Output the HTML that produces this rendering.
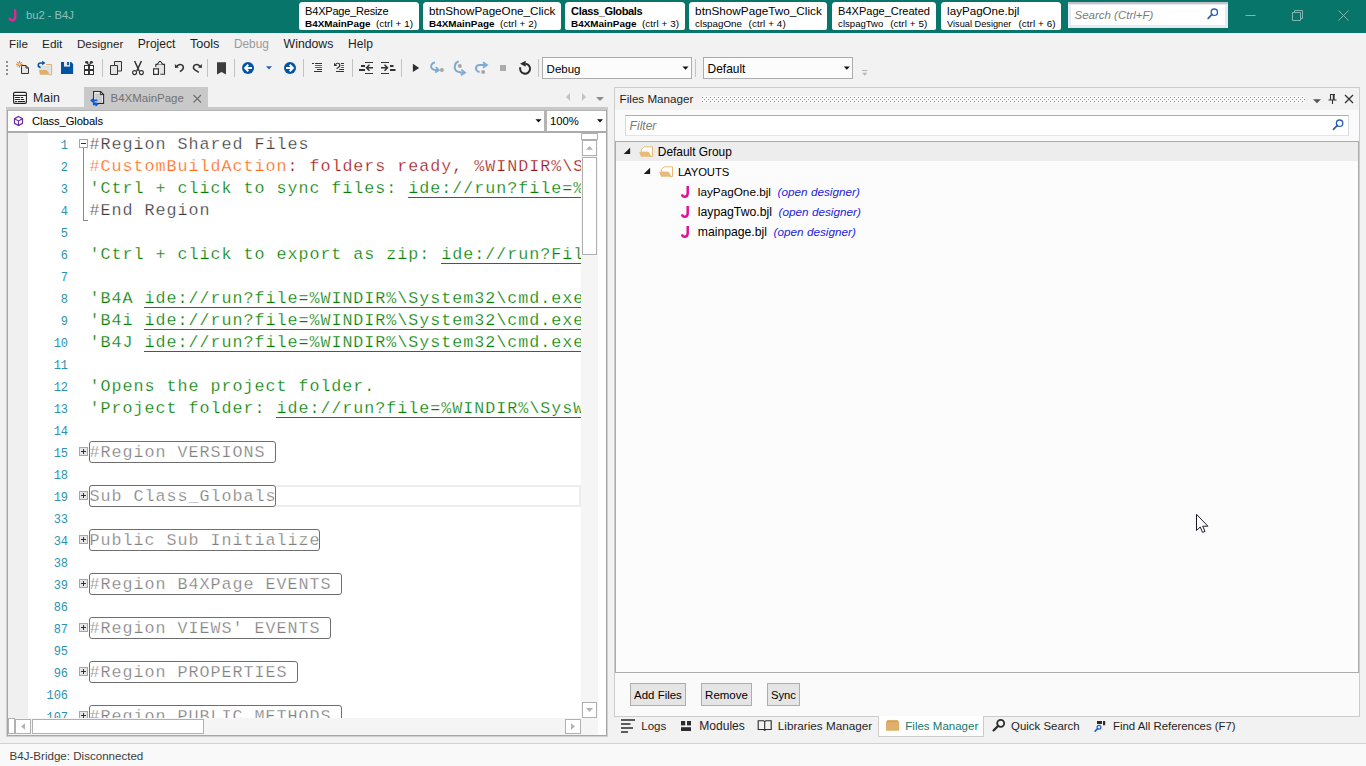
<!DOCTYPE html>
<html lang="en"><head><meta charset="utf-8"><title>bu2 - B4J</title>
<style>
*{box-sizing:border-box;margin:0;padding:0}
html,body{width:1366px;height:766px;overflow:hidden}
body{position:relative;background:#f2f2f2;font-family:"Liberation Sans",sans-serif;font-size:12px;color:#1e1e1e}
.a{position:absolute}
.t{position:absolute;white-space:pre;display:block;font-family:"Liberation Sans",sans-serif;line-height:16px}
svg{position:absolute;overflow:visible}
.titlebar{left:0;top:0;width:1366px;height:33px;background:#07756a}
.ttab{top:2px;height:28px;background:#fff;border-radius:3.5px 3.5px 2px 2px}
.sep{width:1px;background:#c3c3c3;top:59px;height:18px}
.combo{background:#fff;border:1px solid #acacac}
.btn{background:#e5e5e5;border:1px solid #adadad;top:683px;height:23px}
.code{position:absolute;white-space:pre;font-family:"Liberation Mono",monospace;font-size:16.7px;letter-spacing:.98px;line-height:22px;height:22px;left:90px;padding-top:1px;-webkit-text-stroke:.25px #fff}
.ln{position:absolute;white-space:pre;font-family:"Liberation Mono",monospace;font-size:12px;letter-spacing:-.05px;line-height:22px;height:22px;left:28px;width:40px;text-align:right;color:#2b91af;padding-top:2.2px}
.g{color:#008000}.lk{color:#008000;background:linear-gradient(#0a860a,#0a860a) 0 17.6px/100% 1.5px no-repeat}
.o{color:#ff6a13}.r{color:#a31515}.k{color:#3c3c3c}
.fold{position:absolute;left:79px;width:9px;height:9px;border:1px solid #a5a5a5;background:#fff}
.fold i{position:absolute;left:1px;top:3px;width:5px;height:1px;background:#333}
.fold b{position:absolute;left:3px;top:1px;width:1px;height:5px;background:#333}
.fold.p{background:#e6e6e6}
.cbox{position:absolute;left:89px;height:22px;border:1px solid #6e6e6e;border-radius:3px;background:#fff}
.cbox span{position:absolute;left:-.5px;top:0px;white-space:pre;font-family:"Liberation Mono",monospace;font-size:16.7px;letter-spacing:.98px;line-height:22px;color:#808080;-webkit-text-stroke:.25px #fff}
</style></head><body>
<div class="a titlebar"></div>
<span id="t1" class="t" style="left:26.10px;top:7.00px;font-size:11.28px;color:#8fc0ba;letter-spacing:-0.055px;">bu2 - B4J</span><div class="a ttab" style="left:299px;width:120px"></div>
<span id="t2" class="t" style="left:305.10px;top:2.60px;font-size:11.09px;color:#000;letter-spacing:-0.259px;">B4XPage_Resize</span><span id="t3" class="t" style="left:305.10px;top:15.90px;font-size:9.88px;color:#000;letter-spacing:0.000px;font-weight:bold;">B4XMainPage</span><span id="t4" class="t" style="left:375.90px;top:15.90px;font-size:9.86px;color:#000;letter-spacing:0.078px;">(ctrl + 1)</span><div class="a ttab" style="left:423px;width:138px"></div>
<span id="t5" class="t" style="left:429.10px;top:2.60px;font-size:11.65px;color:#000;letter-spacing:0.000px;">btnShowPageOne_Click</span><span id="t6" class="t" style="left:429.10px;top:15.90px;font-size:9.88px;color:#000;letter-spacing:0.000px;font-weight:bold;">B4XMainPage</span><span id="t7" class="t" style="left:499.90px;top:15.90px;font-size:9.86px;color:#000;letter-spacing:0.078px;">(ctrl + 2)</span><div class="a ttab" style="left:565px;width:120px"></div>
<span id="t8" class="t" style="left:571.10px;top:2.60px;font-size:11.09px;color:#000;letter-spacing:-0.395px;font-weight:bold;">Class_Globals</span><span id="t9" class="t" style="left:571.10px;top:15.90px;font-size:9.88px;color:#000;letter-spacing:0.000px;font-weight:bold;">B4XMainPage</span><span id="t10" class="t" style="left:641.90px;top:15.90px;font-size:9.86px;color:#000;letter-spacing:0.078px;">(ctrl + 3)</span><div class="a ttab" style="left:689px;width:138px"></div>
<span id="t11" class="t" style="left:695.10px;top:2.60px;font-size:11.76px;color:#000;letter-spacing:0.000px;">btnShowPageTwo_Click</span><span id="t12" class="t" style="left:695.10px;top:15.90px;font-size:9.81px;color:#000;letter-spacing:-0.000px;">clspagOne</span><span id="t13" class="t" style="left:748.60px;top:15.90px;font-size:9.86px;color:#000;letter-spacing:0.078px;">(ctrl + 4)</span><div class="a ttab" style="left:832px;width:104px"></div>
<span id="t14" class="t" style="left:838.10px;top:2.60px;font-size:11.09px;color:#000;letter-spacing:-0.039px;">B4XPage_Created</span><span id="t15" class="t" style="left:838.10px;top:15.90px;font-size:9.59px;color:#000;letter-spacing:0.000px;">clspagTwo</span><span id="t16" class="t" style="left:890.20px;top:15.90px;font-size:9.86px;color:#000;letter-spacing:0.078px;">(ctrl + 5)</span><div class="a ttab" style="left:941px;width:120px"></div>
<span id="t17" class="t" style="left:947.10px;top:2.60px;font-size:11.61px;color:#000;letter-spacing:0.000px;">layPagOne.bjl</span><span id="t18" class="t" style="left:947.10px;top:15.90px;font-size:9.21px;color:#000;letter-spacing:-0.002px;">Visual Designer</span><span id="t19" class="t" style="left:1018.40px;top:15.90px;font-size:9.86px;color:#000;letter-spacing:0.078px;">(ctrl + 6)</span><div class="a" style="left:1068px;top:2px;width:160px;height:26px;background:#e7eaf2"></div>
<div class="a" style="left:1068px;top:2px;width:160px;height:1.5px;background:#c6c1c6"></div>
<div class="a" style="left:1071px;top:5px;width:154px;height:20px;background:#fff"></div>
<span id="t20" class="t" style="left:1074.60px;top:6.50px;font-size:11.48px;color:#7a7a7a;letter-spacing:0.000px;font-style:italic;">Search (Ctrl+F)</span><span id="t21" class="t" style="left:9.10px;top:35.60px;font-size:11.66px;color:#1e1e1e;letter-spacing:0.000px;">File</span><span id="t22" class="t" style="left:42.10px;top:35.60px;font-size:11.78px;color:#1e1e1e;letter-spacing:0.000px;">Edit</span><span id="t23" class="t" style="left:76.90px;top:35.60px;font-size:11.62px;color:#1e1e1e;letter-spacing:0.000px;">Designer</span><span id="t24" class="t" style="left:137.80px;top:35.60px;font-size:12.08px;color:#1e1e1e;letter-spacing:0.000px;">Project</span><span id="t25" class="t" style="left:189.90px;top:35.60px;font-size:12.64px;color:#1e1e1e;letter-spacing:-0.000px;">Tools</span><span id="t26" class="t" style="left:233.90px;top:35.60px;font-size:11.87px;color:#9a9a9a;letter-spacing:0.000px;">Debug</span><span id="t27" class="t" style="left:283.60px;top:35.60px;font-size:12.27px;color:#1e1e1e;letter-spacing:0.000px;">Windows</span><span id="t28" class="t" style="left:348.10px;top:35.60px;font-size:12.06px;color:#1e1e1e;letter-spacing:0.000px;">Help</span><div class="a sep" style="left:102px"></div>
<div class="a sep" style="left:207px"></div>
<div class="a sep" style="left:234px"></div>
<div class="a sep" style="left:303px"></div>
<div class="a sep" style="left:352px"></div>
<div class="a sep" style="left:401px"></div>
<div class="a sep" style="left:538px"></div>
<div class="a sep" style="left:695px"></div>
<div class="a combo" style="left:542px;top:57px;width:150px;height:22px;background:#fcfcfc"></div>
<div class="a combo" style="left:703px;top:57px;width:150px;height:22px;background:#fcfcfc"></div>
<span id="t29" class="t" style="left:546.60px;top:60.50px;font-size:11.47px;color:#000;letter-spacing:0.000px;">Debug</span><span id="t30" class="t" style="left:707.60px;top:60.50px;font-size:11.93px;color:#000;letter-spacing:0.000px;">Default</span><div class="a" style="left:84px;top:87px;width:124px;height:20px;background:#c9c9c9"></div>
<div class="a" style="left:6px;top:107px;width:602px;height:4px;background:#c9c9c9"></div>
<span id="t31" class="t" style="left:33.10px;top:90.00px;font-size:12.32px;color:#1e1e1e;letter-spacing:0.000px;">Main</span><span id="t32" class="t" style="left:110.60px;top:90.00px;font-size:11.46px;color:#717171;letter-spacing:0.000px;">B4XMainPage</span><div class="a" style="left:6px;top:110px;width:602px;height:627px;background:#d0d0d0"></div>
<div class="a" style="left:7px;top:110px;width:600px;height:626px;background:#a6a6a6"></div>
<div class="a" style="left:8px;top:111px;width:598px;height:624px;background:#fff"></div>
<div class="a" style="left:8px;top:110px;width:598px;height:23px;background:#b4b4b4"></div>
<div class="a" style="left:8px;top:111px;width:536px;height:20px;background:#fff"></div>
<div class="a" style="left:547px;top:111px;width:59px;height:20px;background:#fff"></div>
<div class="a" style="left:8px;top:131px;width:598px;height:2px;background:#ababab"></div>
<span id="t33" class="t" style="left:32.00px;top:112.50px;font-size:11.28px;color:#000;letter-spacing:-0.126px;">Class_Globals</span><span id="t34" class="t" style="left:550.10px;top:112.50px;font-size:11.28px;color:#000;letter-spacing:-0.015px;">100%</span><div class="a" style="left:8px;top:133px;width:20px;height:585px;background:#f0f0f0"></div>
<div class="a" id="ed" style="left:28px;top:133px;width:553px;height:585px;background:#fff;overflow:hidden">
<div class="a" style="left:61px;top:352px;width:492px;height:22px;border:2px solid #ededed"></div>
<div class="a" style="left:55px;top:15px;width:1px;height:73px;background:#8a8a8a"></div>
<div class="a" style="left:55px;top:87px;width:5px;height:1px;background:#8a8a8a"></div>
<div class="ln" style="left:0px;top:0px">1</div><div class="code" style="left:61.5px;top:0px"><span class="k">#Region Shared Files</span></div>
<div class="ln" style="left:0px;top:22px">2</div><div class="code" style="left:61.5px;top:22px"><span class="o">#CustomBuildAction</span><span class="r">: folders ready, %WINDIR%\System32\Robocopy.exe</span></div>
<div class="ln" style="left:0px;top:44px">3</div><div class="code" style="left:61.5px;top:44px"><span class="g">'Ctrl + click to sync files: </span><span class="lk">ide://run?file=%WINDIR%\System32\Robocopy.exe</span></div>
<div class="ln" style="left:0px;top:66px">4</div><div class="code" style="left:61.5px;top:66px"><span class="k">#End Region</span></div>
<div class="ln" style="left:0px;top:88px">5</div>
<div class="ln" style="left:0px;top:110px">6</div><div class="code" style="left:61.5px;top:110px"><span class="g">'Ctrl + click to export as zip: </span><span class="lk">ide://run?File=%B4X%\Zipper.jar</span></div>
<div class="ln" style="left:0px;top:132px">7</div>
<div class="ln" style="left:0px;top:154px">8</div><div class="code" style="left:61.5px;top:154px"><span class="g">'B4A </span><span class="lk">ide://run?file=%WINDIR%\System32\cmd.exe&Args=/c&Args=xcopy</span></div>
<div class="ln" style="left:0px;top:176px">9</div><div class="code" style="left:61.5px;top:176px"><span class="g">'B4i </span><span class="lk">ide://run?file=%WINDIR%\System32\cmd.exe&Args=/c&Args=xcopy</span></div>
<div class="ln" style="left:0px;top:198px">10</div><div class="code" style="left:61.5px;top:198px"><span class="g">'B4J </span><span class="lk">ide://run?file=%WINDIR%\System32\cmd.exe&Args=/c&Args=xcopy</span></div>
<div class="ln" style="left:0px;top:220px">11</div>
<div class="ln" style="left:0px;top:242px">12</div><div class="code" style="left:61.5px;top:242px"><span class="g">'Opens the project folder.</span></div>
<div class="ln" style="left:0px;top:264px">13</div><div class="code" style="left:61.5px;top:264px"><span class="g">'Project folder: </span><span class="lk">ide://run?file=%WINDIR%\SysWOW64\explorer.exe</span></div>
<div class="ln" style="left:0px;top:286px">14</div>
<div class="ln" style="left:0px;top:308px">15</div><div class="fold p" style="left:51px;top:314px"><i></i><b></b></div><div class="cbox" style="left:61px;top:308px;width:187px"><span>#Region VERSIONS</span></div>
<div class="ln" style="left:0px;top:330px">18</div>
<div class="ln" style="left:0px;top:352px">19</div><div class="fold p" style="left:51px;top:358px"><i></i><b></b></div><div class="cbox" style="left:61px;top:352px;width:187px"><span>Sub Class_Globals</span></div>
<div class="ln" style="left:0px;top:374px">33</div>
<div class="ln" style="left:0px;top:396px">34</div><div class="fold p" style="left:51px;top:402px"><i></i><b></b></div><div class="cbox" style="left:61px;top:396px;width:231px"><span>Public Sub Initialize</span></div>
<div class="ln" style="left:0px;top:418px">38</div>
<div class="ln" style="left:0px;top:440px">39</div><div class="fold p" style="left:51px;top:446px"><i></i><b></b></div><div class="cbox" style="left:61px;top:440px;width:253px"><span>#Region B4XPage EVENTS</span></div>
<div class="ln" style="left:0px;top:462px">86</div>
<div class="ln" style="left:0px;top:484px">87</div><div class="fold p" style="left:51px;top:490px"><i></i><b></b></div><div class="cbox" style="left:61px;top:484px;width:242px"><span>#Region VIEWS&#x27; EVENTS</span></div>
<div class="ln" style="left:0px;top:506px">95</div>
<div class="ln" style="left:0px;top:528px">96</div><div class="fold p" style="left:51px;top:534px"><i></i><b></b></div><div class="cbox" style="left:61px;top:528px;width:209px"><span>#Region PROPERTIES</span></div>
<div class="ln" style="left:0px;top:550px">106</div>
<div class="ln" style="left:0px;top:572px">107</div><div class="fold p" style="left:51px;top:578px"><i></i><b></b></div><div class="cbox" style="left:61px;top:572px;width:253px"><span>#Region PUBLIC METHODS</span></div>
<div class="fold" style="left:51px;top:6px"><i></i></div>
</div>
<div class="a" style="left:581px;top:133px;width:17px;height:585px;background:#f5f5f5"></div>
<div class="a" style="left:581px;top:133px;width:17px;height:7px;background:#fff;border:1px solid #b0b0b0"></div>
<div class="a" style="left:582px;top:140px;width:15px;height:16px;background:#fff;border:1px solid #b0b0b0"></div>
<div class="a" style="left:582px;top:157px;width:15px;height:98px;background:#fff;border:1px solid #b0b0b0"></div>
<div class="a" style="left:582px;top:702px;width:15px;height:16px;background:#fff;border:1px solid #b0b0b0"></div>
<div class="a" style="left:8px;top:718px;width:598px;height:17px;background:#f5f5f5"></div>
<div class="a" style="left:8px;top:718px;width:7px;height:16px;background:#fff;border:1px solid #b0b0b0"></div>
<div class="a" style="left:15px;top:719px;width:16px;height:15px;background:#fff;border:1px solid #b0b0b0"></div>
<div class="a" style="left:32px;top:719px;width:172px;height:15px;background:#fff;border:1px solid #b0b0b0"></div>
<div class="a" style="left:565px;top:719px;width:16px;height:15px;background:#fff;border:1px solid #b0b0b0"></div>
<div class="a" style="left:598px;top:133px;width:8px;height:602px;background:#fff"></div>
<div class="a" style="left:581px;top:718px;width:17px;height:17px;background:#f5f5f5"></div>
<div class="a" style="left:0;top:743px;width:1366px;height:23px;background:#f9f9f9;border-top:1px solid #d2d2d2"></div>
<span id="t35" class="t" style="left:9.60px;top:747.50px;font-size:11.57px;color:#3c3c3c;letter-spacing:0.000px;">B4J-Bridge: Disconnected</span><div class="a" style="left:614px;top:87px;width:746px;height:630px;background:#fafafa;border:1px solid #cccccc"></div>
<div class="a" style="left:615px;top:88px;width:744px;height:22px;background:#f2f2f2"></div>
<span id="t36" class="t" style="left:619.60px;top:90.50px;font-size:11.65px;color:#1e1e1e;letter-spacing:0.000px;">Files Manager</span><div class="a" style="left:625px;top:115px;width:724px;height:21px;background:#fff;border:1px solid #abadb3;border-bottom-color:#dfe5ee;border-left-color:#d4d9e3;border-right-color:#d4d9e3"></div>
<span id="t37" class="t" style="left:629.60px;top:117.50px;font-size:12.06px;color:#7a7a7a;letter-spacing:0.000px;font-style:italic;">Filter</span><div class="a" style="left:615px;top:141px;width:744px;height:532px;background:#fcfcfc;border:1px solid #ababab"></div>
<div class="a" style="left:616px;top:142px;width:742px;height:19px;background:#ededed"></div>
<span id="t38" class="t" style="left:657.80px;top:143.50px;font-size:11.9px;color:#000;letter-spacing:0.000px;">Default Group</span><span id="t39" class="t" style="left:677.90px;top:163.50px;font-size:11.28px;color:#000;letter-spacing:-0.074px;">LAYOUTS</span><span id="t40" class="t" style="left:697.80px;top:183.50px;font-size:11.76px;color:#000;letter-spacing:0.000px;">layPagOne.bjl</span><span id="t41" class="t" style="left:777.60px;top:183.50px;font-size:11.75px;color:#1b1be0;letter-spacing:0.000px;font-style:italic;">(open designer)</span><span id="t42" class="t" style="left:697.80px;top:203.50px;font-size:12.24px;color:#000;letter-spacing:0.000px;">laypagTwo.bjl</span><span id="t43" class="t" style="left:778.60px;top:203.50px;font-size:11.75px;color:#1b1be0;letter-spacing:0.000px;font-style:italic;">(open designer)</span><span id="t44" class="t" style="left:697.80px;top:223.50px;font-size:12.2px;color:#000;letter-spacing:0.000px;">mainpage.bjl</span><span id="t45" class="t" style="left:773.60px;top:223.50px;font-size:11.75px;color:#1b1be0;letter-spacing:0.000px;font-style:italic;">(open designer)</span><div class="a btn" style="left:630px;width:56px"></div>
<div class="a btn" style="left:701px;width:51px"></div>
<div class="a btn" style="left:767px;width:33px"></div>
<span id="t46" class="t" style="left:634.10px;top:686.50px;font-size:11.46px;color:#000;letter-spacing:0.000px;">Add Files</span><span id="t47" class="t" style="left:705.10px;top:686.50px;font-size:11.49px;color:#000;letter-spacing:0.000px;">Remove</span><span id="t48" class="t" style="left:771.10px;top:686.50px;font-size:11.28px;color:#000;letter-spacing:-0.072px;">Sync</span><div class="a" style="left:878px;top:716px;width:106px;height:21px;background:#fff;border:1px solid #cccccc;border-top:none"></div>
<span id="t49" class="t" style="left:641.30px;top:717.50px;font-size:11.52px;color:#1e1e1e;letter-spacing:0.000px;">Logs</span><span id="t50" class="t" style="left:699.20px;top:717.50px;font-size:12.09px;color:#1e1e1e;letter-spacing:0.000px;">Modules</span><span id="t51" class="t" style="left:777.80px;top:717.50px;font-size:11.71px;color:#1e1e1e;letter-spacing:0.000px;">Libraries Manager</span><span id="t52" class="t" style="left:905.30px;top:717.50px;font-size:11.52px;color:#15786c;letter-spacing:0.000px;">Files Manager</span><span id="t53" class="t" style="left:1011.10px;top:717.50px;font-size:11.43px;color:#1e1e1e;letter-spacing:0.000px;">Quick Search</span><span id="t54" class="t" style="left:1113.00px;top:717.50px;font-size:11.38px;color:#1e1e1e;letter-spacing:0.000px;">Find All References (F7)</span><svg width="1366" height="766" viewBox="0 0 1366 766" style="left:0;top:0">
<path d="M15.2,9.3V16.8c0,4.2 -4.6,4.6 -5.8,1.1" fill="none" stroke="#e3249b" stroke-width="2.4"/>
<path d="M1245.5,15.5h10" stroke="#7fb8b1" stroke-width="1"/>
<path d="M1292.5,12.5h8v8h-8z M1294.5,12.5v-2h8v8h-2" fill="none" stroke="#7fb8b1" stroke-width="1"/>
<path d="M1338.5,10.5l10,10M1348.5,10.5l-10,10" stroke="#7fb8b1" stroke-width="1"/>
<circle cx="1214.3" cy="12.2" r="3.2" fill="none" stroke="#2a5db0" stroke-width="1.3"/><path d="M1212.04,14.46l-3.89,3.89" stroke="#2a5db0" stroke-width="1.7000000000000002" stroke-linecap="round"/>
<circle cx="1339.6" cy="123.2" r="3.2" fill="none" stroke="#2a5db0" stroke-width="1.3"/><path d="M1337.34,125.46l-3.89,3.89" stroke="#2a5db0" stroke-width="1.7000000000000002" stroke-linecap="round"/>
<rect x="6" y="61" width="2" height="2" fill="#8f8f8f"/>
<rect x="6" y="65" width="2" height="2" fill="#8f8f8f"/>
<rect x="6" y="69" width="2" height="2" fill="#8f8f8f"/>
<rect x="6" y="73" width="2" height="2" fill="#8f8f8f"/>
<path d="M21.5,65.5h4.5l2.5,2.5v5.5h-7z" fill="#e6e6e6" stroke="#333" stroke-width="1"/>
<path d="M26,65.5v2.5h2.5" fill="none" stroke="#333" stroke-width="1"/>
<path d="M19.5,61v6.6M16.1,64.3h6.8M17.1,61.9l4.8,4.8M21.9,61.9l-4.8,4.8" stroke="#e07a1f" stroke-width="1"/>
<circle cx="19.5" cy="64.3" r="1" fill="#ffe9b0"/>
<path d="M38.8,65.4h12v9.2h-2.6l-3.5,-4.3h-5.9z" fill="#e3e3e3"/>
<path d="M46.1,64.5h5.5v10.3h-2.2" fill="none" stroke="#ddb16b" stroke-width="1"/>
<path d="M39.1,70.1h7.7l3.1,4.7H39.8z" fill="#ddb16b"/>
<path d="M42.2,60.7l3.2,2.3l-3.2,2.3z" fill="#0353a4"/><path d="M42.6,63h-1.8c-3.2,0 -3.6,4 -0.2,4.4" fill="none" stroke="#0353a4" stroke-width="1.5"/>
<path d="M61,62h10.2l1.9,1.9v10.1h-12.1z" fill="#0353a4"/><rect x="64" y="62" width="6" height="4.6" fill="#e8e8e8"/><rect x="67.1" y="62" width="1.8" height="3.1" fill="#0353a4"/>
<rect x="84" y="65" width="10" height="10" fill="#333"/>
<rect x="85" y="66" width="3" height="3" fill="#fff"/>
<rect x="90" y="66" width="3" height="3" fill="#fff"/>
<rect x="85" y="71" width="3" height="3" fill="#fff"/>
<rect x="90" y="71" width="3" height="3" fill="#fff"/>
<path d="M89,65.4L86.8,62.4M89,65.4L91.2,62.4" stroke="#333" stroke-width="1.2"/><ellipse cx="86.7" cy="62.3" rx="1.6" ry="1.3" fill="#333"/><ellipse cx="91.4" cy="62.3" rx="1.6" ry="1.3" fill="#333"/>
<path d="M114.5,61.5h7v9.5h-7z" fill="#e4e4e4" stroke="#333"/>
<path d="M110.5,65.5h7v9h-7z" fill="#e4e4e4" stroke="#333"/>
<path d="M134.6,61l4.6,10M141.4,61l-4.6,10" stroke="#333" stroke-width="1.5"/>
<circle cx="134.6" cy="72.6" r="2" fill="none" stroke="#333" stroke-width="1.1"/><circle cx="141.4" cy="72.6" r="2" fill="none" stroke="#333" stroke-width="1.1"/>
<rect x="156.5" y="65" width="7.5" height="8.6" fill="#e4e4e4"/>
<path d="M155.8,67v-2.6h8.7v9.9h-4.2" fill="none" stroke="#333" stroke-width="1.1"/>
<path d="M157.4,64.4l1.8,-2.6a1,1 0 0 1 1.6,0l1.8,2.6" fill="#fff" stroke="#333" stroke-width="1.1"/>
<rect x="153.6" y="68.8" width="4.8" height="5.6" fill="#fff" stroke="#333" stroke-width="1.2"/>
<path d="M176.8,66.8C177.6,64.6 180,63.9 181.8,64.9C183.9,66.1 183.7,68.8 182,70.1L180,71.6" fill="none" stroke="#333" stroke-width="1.6"/><path d="M174.8,63.9l0.2,4l3.9,-0.3z" fill="#333"/>
<path d="M200,66.8C199.2,64.6 196.8,63.9 195,64.9C193,66.1 193,68.5 194.6,69.7L198.8,72.4" fill="none" stroke="#333" stroke-width="1.6"/><path d="M202,63.9l-0.2,4l-3.9,-0.3z" fill="#333"/>
<path d="M217,62.2h9v12.3l-4.5,-2.6l-4.5,2.6z" fill="#3c3c3c"/>
<circle cx="248" cy="68" r="6" fill="#0353a4"/><path d="M252,68h-6M248.3,64.8l-3.2,3.2l3.2,3.2" fill="none" stroke="#fff" stroke-width="2"/>
<path d="M266,66.2h6l-3,3.2z" fill="#2a62ae"/>
<circle cx="290" cy="68" r="6" fill="#0353a4"/><path d="M286,68h6M289.7,64.8l3.2,3.2l-3.2,3.2" fill="none" stroke="#fff" stroke-width="2"/>
<path d="M312,63.5h2M315,63.5h7M317,69.5h5M314,71.5h8" stroke="#333"/><path d="M315,65.5h7M315,67.5h7" stroke="#3a8a12"/>
<path d="M340.8,63.5H344M339.2,69.5H344M336,71.5H344" stroke="#333"/><path d="M341.1,65.5H344M341.1,67.5H344" stroke="#3a8a12"/>
<path d="M335.6,64.6C336.4,63 338.6,62.8 339.5,64.2C340.3,65.6 339.3,66.8 338.4,67.4L336.6,68.8" fill="none" stroke="#3a3030" stroke-width="1.2"/><path d="M334,62.7v3.3h3.3z" fill="#333"/>
<path d="M365,62.5h8M365,73.5h8" stroke="#333"/><rect x="361" y="65" width="4" height="2" fill="#333"/><rect x="359" y="69" width="6" height="2" fill="#333"/><path d="M373,67.7h-6M369.5,64.7l-3,3l3,3" fill="none" stroke="#333" stroke-width="1.5"/>
<path d="M381,62.5h8M381,73.5h8" stroke="#333"/><rect x="390" y="65" width="3.5" height="2" fill="#333"/><rect x="390" y="69" width="5.5" height="2" fill="#333"/><path d="M381,67.7h6.5M384.5,64.7l3,3l-3,3" fill="none" stroke="#333" stroke-width="1.5"/>
<path d="M412.9,63.8v8.2l6.3,-4.1z" fill="#2e2e2e"/>
<path d="M435,62.6C431.5,62.8 430,66.5 432,68.6C433.5,70.2 436,70.2 438,70.2" fill="none" stroke="#7ea9d3" stroke-width="2"/><path d="M435.8,67.2L438.8,70.1L435.3,72.6" fill="none" stroke="#7ea9d3" stroke-width="1.8"/><circle cx="441.9" cy="69.9" r="2" fill="#a6a6a6"/>
<path d="M458.8,61.6C455,62 453.8,67 455.5,70C457,72.6 461,72.6 464.3,72.6" fill="none" stroke="#7ea9d3" stroke-width="2"/><path d="M461.3,69.6L465,72.6L460.8,75.2" fill="none" stroke="#7ea9d3" stroke-width="1.8"/><circle cx="459.8" cy="66" r="2" fill="#a6a6a6"/>
<path d="M486.3,65H479.5C476.5,65 475,68 476.6,70.3C477.4,71.5 478.6,72 479.6,72.1" fill="none" stroke="#7ea9d3" stroke-width="2"/><path d="M483,62.2L486.9,65L483,67.7" fill="none" stroke="#7ea9d3" stroke-width="1.8"/><circle cx="483.1" cy="72.1" r="2" fill="#a6a6a6"/>
<rect x="500" y="65" width="6" height="6" fill="#ababab"/>
<path d="M525.5,63.7A5,5 0 1 1 520.3,67.2" fill="none" stroke="#2b2b2b" stroke-width="2"/><path d="M520,63.8l5.7,-3v5.9z" fill="#2b2b2b"/>
<path d="M682.5,66.4h6l-3,3.4z" fill="#111"/>
<path d="M843.8,66.4h6l-3,3.4z" fill="#111"/>
<path d="M862,70.5h5.5" stroke="#b5b5b5"/><path d="M862.2,72.8h5l-2.5,3z" fill="#b5b5b5"/>
<rect x="13.6" y="92.4" width="12.8" height="11" rx="1.3" fill="#fff" stroke="#222" stroke-width="1.1"/><path d="M13.6,95.4h12.8" stroke="#222" stroke-width="1.1"/>
<path d="M15.2,97.5h4.5M21.2,97.5h1.6M15.2,99.5h4.5M21.2,99.5h2.6M15.2,101.5h1.4M18.2,101.5h6.6" stroke="#222" stroke-width="1" stroke-linecap="round"/>
<path d="M93.6,91.5h7l3,3v8.9h-10z" fill="#f4f4f4" stroke="#2b2b2b" stroke-width="1.1"/><path d="M95.2,93.3h4.6l2.4,2.4v6.2h-7z" fill="#cbcbcb"/><path d="M100.4,91.6v3h3" fill="none" stroke="#2b2b2b" stroke-width="1"/>
<path d="M97.4,100.4H92M93.8,100.4V104.3H96.6" fill="none" stroke="#0b5bd3" stroke-width="1.7"/><path d="M93.2,97.9L90.1,100.4L93.2,102.9zM95.6,101.9L98.6,104.3L95.6,106.7z" fill="#0b5bd3"/>
<path d="M193.5,95l7.5,7.5M201,95l-7.5,7.5" stroke="#6e6e6e" stroke-width="1.1"/>
<path d="M570,93l-4,4l4,4z" fill="#c2c2c2"/><path d="M582,93l4,4l-4,4z" fill="#c2c2c2"/><path d="M596,97h8l-4,4z" fill="#8c8c8c"/>
<path d="M535.5,119.2h6l-3,3.4z" fill="#111"/><path d="M597,119.2h6l-3,3.4z" fill="#111"/>
<path d="M18.5,116.5l4,2.2v4.6l-4,2.2l-4,-2.2v-4.6z" fill="none" stroke="#6a2ba3" stroke-width="1.2"/><path d="M14.5,118.7l4,2.2l4,-2.2M18.5,120.9v4.6" fill="none" stroke="#6a2ba3" stroke-width="1.1"/>
<path d="M586,149.8h7l-3.5,-3.8z" fill="#b2b2b2"/>
<path d="M586,708.1h7l-3.5,3.8z" fill="#b2b2b2"/>
<path d="M25,723.2v6.6l-4,-3.3z" fill="#b2b2b2"/>
<path d="M571,723.2v6.6l4,-3.3z" fill="#b2b2b2"/>
<defs><pattern id="gr" width="4" height="4" patternUnits="userSpaceOnUse" x="702" y="97"><rect width="1" height="1" fill="#8c8c8c"/><rect x="2" y="2" width="1" height="1" fill="#8c8c8c"/></pattern></defs>
<rect x="701" y="96" width="604" height="7" fill="#f8f8f8"/><rect x="702" y="97" width="603" height="5" fill="url(#gr)"/>
<path d="M1313,99.2h8l-4,4z" fill="#555"/>
<path d="M1330,94.5h5M1330.5,94.5v5.5M1334,94.5v5.5M1328.5,100h8M1332.5,100v4" fill="none" stroke="#333" stroke-width="1.1"/><path d="M1333.5,95v5" stroke="#333" stroke-width="1.4"/>
<path d="M1345,95l8,8M1353,95l-8,8" stroke="#333" stroke-width="1.3"/>
<path d="M630.1,147.8v6.2h-6.4z" fill="#1a1a1a"/>
<path d="M644.3000000000001,146.8h8.2v9.7h-2.2l-2.4,-4.4h-6.6v-2.6z" fill="#fff" stroke="#e7bb77" stroke-width="1"/><path d="M639.1,152.10000000000002h9.7l2.6,4.7H641.0z" fill="#e7bb77"/>
<path d="M650.1,167.7v6.2h-6.4z" fill="#1a1a1a"/>
<path d="M664.3000000000001,166.8h8.2v9.7h-2.2l-2.4,-4.4h-6.6v-2.6z" fill="#fff" stroke="#e7bb77" stroke-width="1"/><path d="M659.1,172.10000000000002h9.7l2.6,4.7H661.0z" fill="#e7bb77"/>
<path d="M687.7,185.9V193.3c0,4.2 -4.6,4.6 -5.8,1.1" fill="none" stroke="#db1493" stroke-width="2.5"/>
<path d="M687.7,205.9V213.3c0,4.2 -4.6,4.6 -5.8,1.1" fill="none" stroke="#db1493" stroke-width="2.5"/>
<path d="M687.7,225.9V233.3c0,4.2 -4.6,4.6 -5.8,1.1" fill="none" stroke="#db1493" stroke-width="2.5"/>
<path d="M621,720h14M621,724h9.5M621,728h12M621,732h7" stroke="#2b2b2b" stroke-width="1.6"/>
<rect x="681" y="721" width="4.2" height="4.4" fill="#2b2b2b"/><rect x="687" y="721" width="4" height="4.4" fill="#2b2b2b"/><rect x="681" y="727.2" width="10" height="3.8" fill="#2b2b2b"/>
<path d="M758.2,720.7h5.3l1.2,1l1.2,-1h5.3v8.8h-5.3l-1.2,0.9l-1.2,-0.9h-5.3z M764.7,721.7v8.3" fill="none" stroke="#2b2b2b" stroke-width="1.1"/>
<path d="M886,721.5l1.5,-1.5h10l1.7,1.7v9.1H886z" fill="#ddb16b"/><path d="M887.5,721.6h10" stroke="#c99b55" stroke-width="0.8"/>
<circle cx="1000.7" cy="723.3" r="3.5" fill="none" stroke="#2b2b2b" stroke-width="1.8"/><path d="M998.23,725.77l-4.67,4.67" stroke="#2b2b2b" stroke-width="2.2" stroke-linecap="round"/>
<rect x="1097" y="721" width="5" height="3" fill="#2b2b2b"/><rect x="1103" y="721" width="2.2" height="4.2" fill="#2b2b2b"/>
<circle cx="1099" cy="727.3" r="1.9" fill="none" stroke="#1f5fb8" stroke-width="1.2"/><path d="M1097.66,728.64l-2.55,2.55" stroke="#1f5fb8" stroke-width="1.6" stroke-linecap="round"/>
<path d="M1196.5,514.3v16.2l3.7,-3.5l2.4,5.4l2.4,-1l-2.3,-5.2h5.2z" fill="#fff" stroke="#1a1a2a" stroke-width="1" stroke-linejoin="miter"/>
</svg>
</body></html>
